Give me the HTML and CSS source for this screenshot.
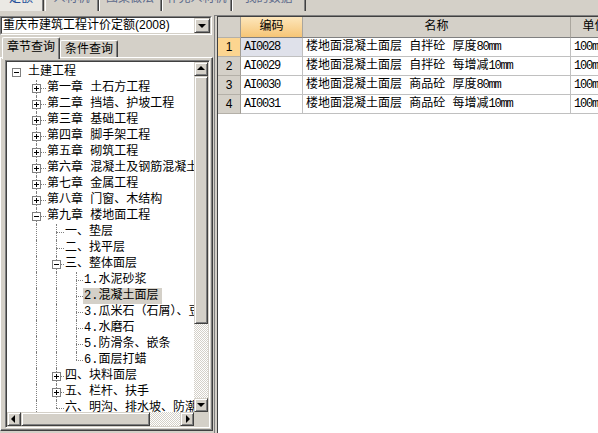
FILE: index.html
```html
<!DOCTYPE html>
<html lang="zh">
<head>
<meta charset="utf-8">
<title>定额</title>
<link rel="stylesheet" href="styles.css">
</head>
<body>
<div class="tabs">
  <div class="tab t1 on">定额</div>
  <div class="tab t2">人材机</div>
  <div class="tab t3">图集做法</div>
  <div class="tab t4">补充人材机</div>
  <div class="tab t5">我的数据</div>
</div>
<div class="main">
  <div class="left">
    <div class="combo">
      <div class="combo-in">
        <span class="combo-text">重庆市建筑工程计价定额(2008)</span>
        <span class="btn dn"></span>
      </div>
    </div>
    <div class="qtabs">
      <div class="qtab on">章节查询</div>
      <div class="qtab">条件查询</div>
    </div>
    <div class="page">
      <div class="tree">
        <div class="tv">
          <div class="r"><span class="o o0"><span class="bx"></span></span><span class="tx">土建工程</span></div>
          <div class="r"><span class="g"></span><span class="o o1 t"><span class="bx p"></span></span><span class="tx">第一章 土石方工程</span></div>
          <div class="r"><span class="g"></span><span class="o o1 t"><span class="bx p"></span></span><span class="tx">第二章 挡墙、护坡工程</span></div>
          <div class="r"><span class="g"></span><span class="o o1 t"><span class="bx p"></span></span><span class="tx">第三章 基础工程</span></div>
          <div class="r"><span class="g"></span><span class="o o1 t"><span class="bx p"></span></span><span class="tx">第四章 脚手架工程</span></div>
          <div class="r"><span class="g"></span><span class="o o1 t"><span class="bx p"></span></span><span class="tx">第五章 砌筑工程</span></div>
          <div class="r"><span class="g"></span><span class="o o1 t"><span class="bx p"></span></span><span class="tx">第六章 混凝土及钢筋混凝土工程</span></div>
          <div class="r"><span class="g"></span><span class="o o1 t"><span class="bx p"></span></span><span class="tx">第七章 金属工程</span></div>
          <div class="r"><span class="g"></span><span class="o o1 t"><span class="bx p"></span></span><span class="tx">第八章 门窗、木结构</span></div>
          <div class="r"><span class="g"></span><span class="o o1 t"><span class="bx"></span></span><span class="tx">第九章 楼地面工程</span></div>
          <div class="r"><span class="g"></span><span class="g v"></span><span class="o o2 t"></span><span class="tx">一、垫层</span></div>
          <div class="r"><span class="g"></span><span class="g v"></span><span class="o o2 t"></span><span class="tx">二、找平层</span></div>
          <div class="r"><span class="g"></span><span class="g v"></span><span class="o o2 t"><span class="bx"></span></span><span class="tx">三、整体面层</span></div>
          <div class="r"><span class="g"></span><span class="g v"></span><span class="g v"></span><span class="o o3 t"></span><span class="tx">1.水泥砂浆</span></div>
          <div class="r"><span class="g"></span><span class="g v"></span><span class="g v"></span><span class="o o3 t"></span><span class="tx sel">2.混凝土面层</span></div>
          <div class="r"><span class="g"></span><span class="g v"></span><span class="g v"></span><span class="o o3 t"></span><span class="tx">3.瓜米石（石屑）、豆石浆</span></div>
          <div class="r"><span class="g"></span><span class="g v"></span><span class="g v"></span><span class="o o3 t"></span><span class="tx">4.水磨石</span></div>
          <div class="r"><span class="g"></span><span class="g v"></span><span class="g v"></span><span class="o o3 t"></span><span class="tx">5.防滑条、嵌条</span></div>
          <div class="r"><span class="g"></span><span class="g v"></span><span class="g v"></span><span class="o o3 l"></span><span class="tx">6.面层打蜡</span></div>
          <div class="r"><span class="g"></span><span class="g v"></span><span class="o o2 t"><span class="bx p"></span></span><span class="tx">四、块料面层</span></div>
          <div class="r"><span class="g"></span><span class="g v"></span><span class="o o2 t"><span class="bx p"></span></span><span class="tx">五、栏杆、扶手</span></div>
          <div class="r"><span class="g"></span><span class="g v"></span><span class="o o2 l"></span><span class="tx">六、明沟、排水坡、防潮层</span></div>
        </div>
        <div class="vs">
          <span class="btn up"></span>
          <span class="thumb vthumb"></span>
          <span class="track"></span>
          <span class="btn dn"></span>
        </div>
        <div class="hs">
          <span class="btn lf"></span>
          <span class="thumb hthumb"></span>
          <span class="track"></span>
          <span class="btn rt"></span>
        </div>
        <div class="corner"></div>
      </div>
    </div>
  </div>
  <div class="right">
    <div class="grid">
      <div class="row head">
        <div class="c rn"></div>
        <div class="c hot">编码</div>
        <div class="c">名称</div>
        <div class="c">单位</div>
      </div>
      <div class="row">
        <div class="c rn cur">1</div>
        <div class="c code focus">AI0028</div>
        <div class="c">楼地面混凝土面层 自拌砼 厚度<span class="en">80mm</span></div>
        <div class="c"><span class="en">100m2</span></div>
      </div>
      <div class="row">
        <div class="c rn">2</div>
        <div class="c code">AI0029</div>
        <div class="c">楼地面混凝土面层 自拌砼 每增减<span class="en">10mm</span></div>
        <div class="c"><span class="en">100m2</span></div>
      </div>
      <div class="row">
        <div class="c rn">3</div>
        <div class="c code">AI0030</div>
        <div class="c">楼地面混凝土面层 商品砼 厚度<span class="en">80mm</span></div>
        <div class="c"><span class="en">100m2</span></div>
      </div>
      <div class="row">
        <div class="c rn">4</div>
        <div class="c code">AI0031</div>
        <div class="c">楼地面混凝土面层 商品砼 每增减<span class="en">10mm</span></div>
        <div class="c"><span class="en">100m2</span></div>
      </div>
    </div>
  </div>
</div>
</body>
</html>
```

FILE: styles.css
```css
* { box-sizing: border-box; }
html, body { margin: 0; padding: 0; }
body {
  width: 598px;
  height: 433px;
  overflow: hidden;
  background: #d4d0c8;
  color: #000;
  font: 12px "Liberation Sans", "Noto Sans CJK SC", sans-serif;
}

/* top tab strip (cropped) */
.tabs { height: 14px; overflow: hidden; display: flex; }
.tab {
  flex: none;
  height: 20px;
  margin-top: -9px;
  line-height: 14px;
  text-align: center;
  color: #5d6b8c;
  border-left: 1px solid #fff;
  border-right: 1px solid #808080;
  box-shadow: 1px 0 0 #404040;
}
.tab.on { background: #ebe9e4; color: #24509a; border-left: 0; }
.t1 { width: 43px; }
.t2 { width: 53px; margin-left: 2px; }
.t3 { width: 62px; margin-left: 1px; }
.t4 { width: 69px; margin-left: 1px; }
.t5 { width: 73px; margin-left: 1px; }

.main { display: flex; height: 419px; }

/* left side */
.left { width: 213px; flex: none; padding-top: 2px; display: flex; flex-direction: column; }
.combo {
  width: 212px;
  height: 19px;
  border: 1px solid;
  border-color: #808080 #fff #fff #808080;
}
.combo-in {
  height: 17px;
  border: 1px solid;
  border-color: #404040 #d4d0c8 #d4d0c8 #404040;
  background: #fff;
  display: flex;
}
.combo-text { flex: 1; line-height: 15px; padding-left: 1px; white-space: nowrap; overflow: hidden; }
.combo .btn { width: 16px; height: 15px; }

.btn {
  position: relative;
  flex: none;
  width: 14px;
  height: 14px;
  background: #d4d0c8;
  border: 1px solid;
  border-color: #d4d0c8 #404040 #404040 #d4d0c8;
  box-shadow: inset 1px 1px #fff, inset -1px -1px #808080;
}
.btn::before {
  content: "";
  position: absolute;
  left: 50%;
  top: 50%;
  width: 0;
  height: 0;
  border: 4px solid transparent;
}
.btn.dn::before { border-top-color: #000; border-bottom-width: 0; margin: -2px 0 0 -4px; }
.btn.up::before { border-bottom-color: #000; border-top-width: 0; margin: -3px 0 0 -4px; }
.btn.lf::before { border-right-color: #000; border-left-width: 0; margin: -4px 0 0 -3px; }
.btn.rt::before { border-left-color: #000; border-right-width: 0; margin: -4px 0 0 -1px; }

.qtabs {
  display: flex;
  align-items: flex-end;
  height: 20px;
  margin-top: 2px;
  padding-left: 2px;
  position: relative;
  z-index: 1;
}
.qtab {
  flex: none;
  width: 58px;
  height: 17px;
  line-height: 16px;
  text-align: center;
  background: #d4d0c8;
  border-top: 1px solid #fff;
  border-left: 1px solid #fff;
  border-right: 1px solid #404040;
  box-shadow: inset -1px 0 #808080;
  border-radius: 2px 2px 0 0;
}
.qtab.on { height: 22px; margin-bottom: -2px; line-height: 19px; }

.page {
  height: 374px;
  flex: none;
  border: 1px solid;
  border-color: #fff #404040 #404040 #fff;
  box-shadow: inset -1px -1px #808080;
  padding: 2px 2px 2px 4px;
}
.tree {
  height: 368px;
  border: 1px solid;
  border-color: #808080 #fff #fff #808080;
  box-shadow: inset 1px 1px #404040, inset -1px -1px #d4d0c8;
  padding: 1px;
  display: grid;
  grid-template-columns: 187px 14px;
  grid-template-rows: 350px 14px;
}
.tv {
  background: #fff;
  overflow: hidden;
  padding-top: 2px;
  font-family: "Liberation Mono", "Noto Sans CJK SC", monospace;
}
.r { display: flex; height: 16px; line-height: 16px; white-space: nowrap; }
.g, .o { position: relative; flex: none; height: 16px; width: 20px; }
.o0 { width: 20px; }
.o1 { width: 19px; }
.o2 { width: 17px; }
.o3 { width: 16px; }
.g.v::before, .o.t::before, .o.l::before {
  content: "";
  position: absolute;
  left: 9px;
  top: 0;
  bottom: 0;
  border-left: 1px dotted #808080;
}
.o.l::before { bottom: 8px; }
.o.t::after, .o.l::after {
  content: "";
  position: absolute;
  left: 9px;
  right: 0;
  top: 8px;
  border-top: 1px dotted #808080;
}
.bx {
  position: absolute;
  left: 5px;
  top: 4px;
  width: 9px;
  height: 9px;
  border: 1px solid #808080;
  background: #fff;
  z-index: 1;
}
.bx::before {
  content: "";
  position: absolute;
  left: 1px;
  top: 3px;
  width: 5px;
  height: 1px;
  background: #000;
}
.bx.p::after {
  content: "";
  position: absolute;
  left: 3px;
  top: 1px;
  width: 1px;
  height: 5px;
  background: #000;
}
.tx { flex: none; padding: 0 1px; }
.tx.sel { background: #d4d0c8; padding-right: 4px; }

.vs { display: flex; flex-direction: column; }
.hs { display: flex; }
.thumb {
  flex: none;
  background: #d4d0c8;
  border: 1px solid;
  border-color: #d4d0c8 #404040 #404040 #d4d0c8;
  box-shadow: inset 1px 1px #fff, inset -1px -1px #808080;
}
.vthumb { height: 248px; }
.hthumb { width: 129px; }
.track {
  flex: 1;
  background: repeating-conic-gradient(#fff 0 25%, #d4d0c8 0 50%) 0 0 / 2px 2px;
}
.corner { background: #d4d0c8; }

/* right grid */
.right {
  flex: 1;
  min-width: 0;
  margin: 1px 0 0 1px;
  border-left: 1px solid #808080;
  border-top: 1px solid #808080;
  padding-left: 2px;
  display: flex;
}
.grid {
  flex: 1;
  min-width: 0;
  background: #fff;
  border-left: 1px solid #404040;
  border-top: 1px solid #404040;
  overflow: hidden;
  font-family: "Liberation Mono", "Noto Sans CJK SC", monospace;
}
.row {
  display: grid;
  grid-template-columns: 23px 62px 268px 48px;
  width: 401px;
  height: 19px;
}
.c {
  border-right: 1px solid #c0c0c0;
  border-bottom: 1px solid #c0c0c0;
  line-height: 18px;
  padding-left: 3px;
  white-space: nowrap;
  overflow: hidden;
}
.head { height: 21px; }
.head .c {
  background: #d4d0c8;
  border-right-color: #aaa69e;
  border-bottom-color: #808080;
  line-height: 20px;
  text-align: center;
  padding-left: 0;
}
.head .c.hot { background: linear-gradient(#fde6bb, #f6c576); }
.c.rn {
  background: #d4d0c8;
  border-right-color: #a09c94;
  border-bottom-color: #b4b0a8;
  text-align: center;
  padding-left: 0;
  font-family: "Liberation Sans", sans-serif;
}
.c.rn.cur { background: #fcd590; }
.code, .en { letter-spacing: -1.2px; }
.c.focus { background: #dfe1ea; }
```
